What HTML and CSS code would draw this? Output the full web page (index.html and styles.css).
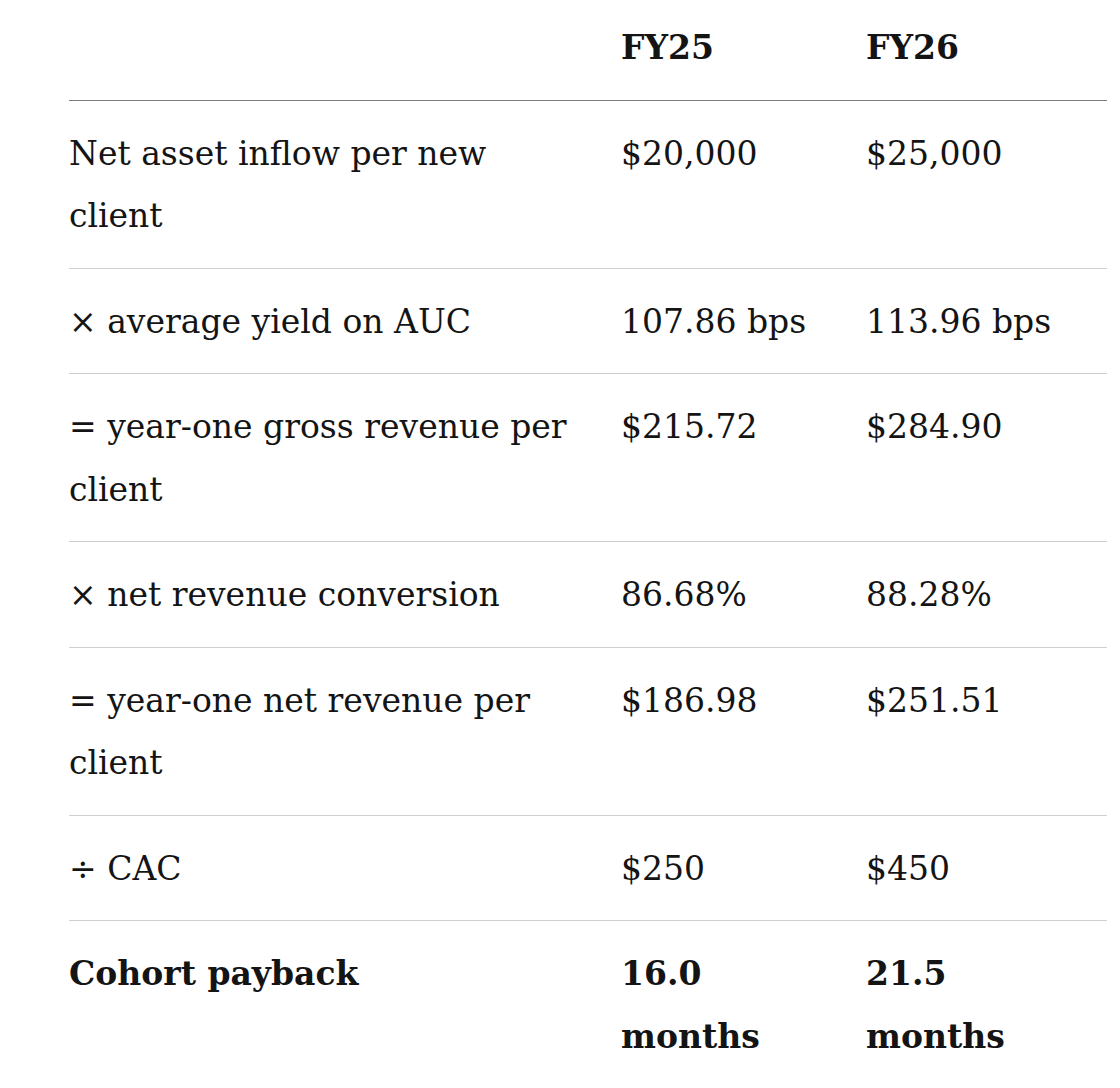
FILE: index.html
```html
<!DOCTYPE html>
<html lang="en">
<head>
<meta charset="utf-8">
<title>Cohort payback</title>
<link rel="stylesheet" href="styles.css">
</head>
<body>
<table class="payback">
  <colgroup>
    <col class="c-label">
    <col class="c-fy25">
    <col class="c-fy26">
  </colgroup>
  <thead>
    <tr>
      <th></th>
      <th>FY25</th>
      <th>FY26</th>
    </tr>
  </thead>
  <tbody>
    <tr>
      <td>Net asset inflow per new client</td>
      <td>$20,000</td>
      <td>$25,000</td>
    </tr>
    <tr>
      <td>× average yield on AUC</td>
      <td>107.86 bps</td>
      <td>113.96 bps</td>
    </tr>
    <tr>
      <td>= year-one gross revenue per client</td>
      <td>$215.72</td>
      <td>$284.90</td>
    </tr>
    <tr>
      <td>× net revenue conversion</td>
      <td>86.68%</td>
      <td>88.28%</td>
    </tr>
    <tr>
      <td>= year-one net revenue per client</td>
      <td>$186.98</td>
      <td>$251.51</td>
    </tr>
    <tr>
      <td>÷ CAC</td>
      <td>$250</td>
      <td>$450</td>
    </tr>
    <tr class="total">
      <td>Cohort payback</td>
      <td>16.0 months</td>
      <td>21.5 months</td>
    </tr>
  </tbody>
</table>
</body>
</html>
```

FILE: styles.css
```css
html, body {
  margin: 0;
  padding: 0;
  background: #ffffff;
}

body {
  font-family: "DejaVu Serif", "Liberation Serif", serif;
  color: #141414;
}

.payback {
  margin-left: 69px;
  width: 1038px;
  border-collapse: collapse;
  table-layout: fixed;
  font-size: 33px;
  line-height: 62.5px;
}

.c-label { width: 552px; }
.c-fy25 { width: 245px; }
.c-fy26 { width: 241px; }

.payback th,
.payback td {
  text-align: left;
  vertical-align: top;
  padding: 22px 48px 20px 0;
}

.payback th {
  font-weight: 700;
  padding-top: 17px;
  padding-bottom: 20px;
  border-bottom: 1px solid #7c7c7c;
}

.payback td {
  font-weight: 400;
  border-bottom: 1px solid #cfcfcf;
}

.payback .total td {
  font-weight: 700;
  border-bottom: none;
}
```
